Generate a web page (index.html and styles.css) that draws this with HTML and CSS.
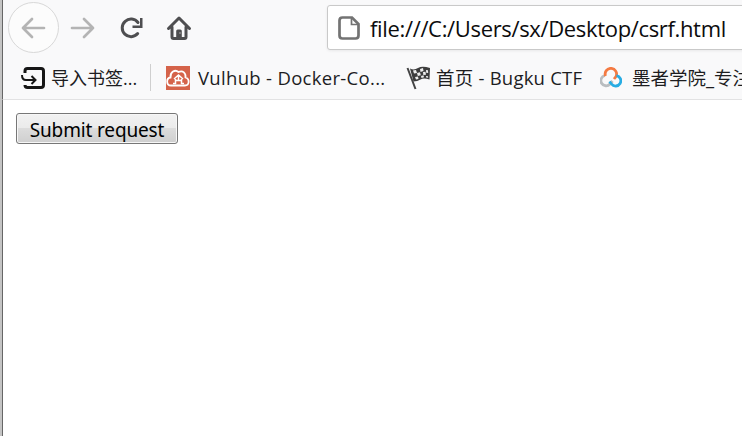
FILE: index.html
```html
<!DOCTYPE html>
<html lang="zh-CN">
<head>
<meta charset="utf-8">
<title>csrf.html</title>
<link rel="stylesheet" href="styles.css">
</head>
<body>
<div class="window">
  <header class="chrome">
    <nav class="toolbar">
      <div class="back"><svg width="26" height="24" viewBox="0 0 26 24"><path d="M24 12H3M12 3L3 12l9 9"/></svg></div>
      <svg class="forward" width="26" height="24" viewBox="0 0 26 24"><path d="M2 12h21M14 3l9 9-9 9"/></svg>
      <svg class="reload" width="26" height="24" viewBox="0 0 26 24"><path class="arc" d="M18.700 17.600A8.800 8.800 0 1 1 19 6.500"/><path class="tip" d="M21 2h2.500v10h-10V9.500H21z"/></svg>
      <svg class="home" width="26" height="26" viewBox="0 0 26 26"><path class="line" d="M2.500 13.500L13 3l10.500 10.500M6 12v10q0 1.500 1.500 1.500h11q1.500 0 1.500-1.500V12"/><path class="door" d="M10.200 23v-7q0-1.500 1.500-1.500h2.600q1.500 0 1.500 1.500v7z"/><path class="knob" d="M14 17v2"/></svg>
      <div class="address">
        <svg class="page-icon" width="22" height="24" viewBox="0 0 22 24"><path d="M4.500 1.500h9.500L20.500 8v11.500q0 3-3 3h-13q-3 0-3-3v-15q0-3 3-3z"/><path class="fold" d="M13.500 2v6.500H20"/></svg>
        <span class="url">file:///C:/Users/sx/Desktop/csrf.html</span>
      </div>
    </nav>
    <div class="bookmarks">
      <div class="bookmark import">
        <svg width="24" height="22" viewBox="0 0 24 22"><path d="M4 6V4q0-2.500 2.500-2.500h13.500q2.500 0 2.500 2.500v14q0 2.500-2.500 2.500H6.500Q4 20.500 4 18"/><path class="arrow" d="M1 8q0 5 4 5h9M10.500 9l4 4-4 4"/></svg>
        <span>导入书签...</span>
      </div>
      <div class="divider"></div>
      <div class="bookmark vulhub">
        <svg width="24" height="24" viewBox="0 0 24 24"><rect width="24" height="24" fill="#d5634a"/><path d="M5 19.500C0 19.500 0 12 4.500 11.500C4 6 9 3 12.500 6C17 4 20 7 19.500 11.500C24 13 23.500 19.500 19 19.500Z"/><path class="house" d="M8 13l4.500-4 4.500 4M9.500 13v5M15.500 13v5M7 17.500h3M15 17.500h3M10 14.500h5M12.500 10v4"/></svg>
        <span>Vulhub - Docker-Co...</span>
      </div>
      <div class="bookmark bugku">
        <svg width="25" height="24" viewBox="0 0 25 24"><path class="pole" d="M1.500 2l8 21"/><path class="flag" d="M4 2.500q4 2 8-.5t12 0l-.5 11.500q-6-2-9 0t-7 2z"/><path class="checks" d="M7 4.500l3-.5 1 3-3 .5zM14 3l3-1 .5 3-3 1zM20 4l2 .2.200 2.800-2-.2zM11 7l3-.7.8 3-3 .7zM17 6l2.500-.2.5 3-2.700.2zM9 11l3-.5.5 2.500-2.500.5zM15 10l2.500-.8.5 2-2.500.8zM20 10l2 .3.200 1.500-2-.3z"/></svg>
        <span>首页 - Bugku CTF</span>
      </div>
      <div class="bookmark mozhe">
        <svg width="22" height="22" viewBox="0 0 22 22"><path stroke="#b9bdc0" d="M5 8.500A5.200 5.200 0 1 0 10 17L12.500 14"/><path stroke="#f47a42" d="M5.500 9A5.700 5.700 0 1 1 16 9.500L14 12"/><path stroke="#27ace3" d="M16.500 8.700A5.200 5.200 0 1 1 11.500 17L9.500 14.500"/></svg>
        <span>墨者学院_专注</span>
      </div>
    </div>
  </header>
  <main><button type="button"><span>Submit request</span></button></main>
</div>
</body>
</html>
```
FILE: styles.css
```css
* { box-sizing: border-box; }
body { margin: 0; overflow: hidden; background: #fff; }
svg { display: block; flex: none; fill: none; }
.window { width: 742px; height: 436px; overflow: hidden; border-left: 2px solid #c4c4c4; display: flex; flex-direction: column; }
.window > * { border-left: 1px solid #666; }
.chrome { height: 100px; flex: none; background: #f9f9fa; border-bottom: 1px solid #e2e2e3; }
.toolbar { height: 55px; display: flex; align-items: center; }
.back { width: 51px; height: 51px; margin-left: 5px; border: 1px solid #d8d8d8; border-radius: 50%; background: #fcfcfc; display: flex; align-items: center; justify-content: center; flex: none; }
.back svg, .forward { stroke: #b4b4b4; stroke-width: 2.7; stroke-linecap: round; stroke-linejoin: round; }
.back svg { margin-right: 2px; }
.forward { margin-left: 11px; }
.reload { margin-left: 23px; }
.arc { stroke: #4e4e50; stroke-width: 3; stroke-linecap: round; }
.tip { fill: #4e4e50; }
.home { margin-left: 21px; }
.line { stroke: #4e4e50; stroke-width: 3; stroke-linecap: round; stroke-linejoin: round; }
.door { fill: #4e4e50; }
.knob { stroke: #aaa; }
.address { width: 440px; height: 45px; margin-left: 135px; flex: none; background: #fff; border: 1px solid #c9c9c9; border-radius: 3px; box-shadow: 0 1px 3px #0001; display: flex; align-items: center; padding-left: 10px; }
.page-icon { stroke: #737373; stroke-width: 2.7; }
.fold { stroke-width: 1.7; }
.url { margin-left: 10px; font: 22px/30px "Open Sans", sans-serif; color: #0c0c0d; white-space: nowrap; letter-spacing: -.34px; }
.bookmarks { height: 45px; display: flex; align-items: center; }
.bookmark { display: flex; align-items: center; flex: none; white-space: nowrap; color: #1d1d1f; font: 18.500px/26px "Open Sans", "Noto Sans CJK SC", sans-serif; }
.import { margin-left: 18px; width: 129px; gap: 6px; stroke: #161616; stroke-width: 3; }
.import span { font-size: 18px; stroke: none; }
.arrow { stroke-width: 2; }
.divider { width: 1px; height: 27px; flex: none; background: #cfcfcf; }
.vulhub { margin-left: 15px; width: 240px; gap: 8px; }
.vulhub span { letter-spacing: .31px; }
.vulhub path { stroke: #fff; stroke-width: 1.8; }
.vulhub .house { stroke-width: 1.5; }
.bugku { width: 194px; gap: 5px; }
.bugku span { letter-spacing: .22px; }
.pole { stroke: #444; stroke-width: 2; }
.flag { fill: #3d3d3d; }
.checks { fill: #eee; }
.mozhe { gap: 10px; }
.mozhe path { stroke-width: 2.8; }
main { flex: 1; padding: 13px; }
button { display: flex; align-items: center; justify-content: center; width: 162px; height: 31px; padding: 2px 0 0; border: 1px solid #777; border-radius: 3px; background: linear-gradient(#f2f2f2, #ebebeb 49%, #dcdcdc 50%, #cfcfcf); box-shadow: inset 0 0 0 1px #f7f7f7; color: #000; font: 19px/28px "Noto Sans", sans-serif; letter-spacing: -.15px; white-space: nowrap; }
```
